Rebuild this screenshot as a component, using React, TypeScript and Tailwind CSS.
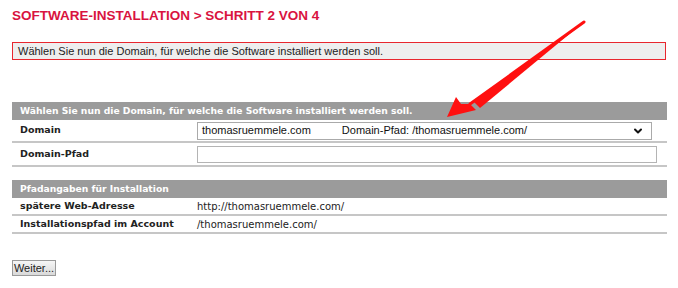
import { ChevronDown } from "lucide-react";

const pathRows = [
  { label: "spätere Web-Adresse", value: "http://thomasruemmele.com/" },
  { label: "Installationspfad im Account", value: "/thomasruemmele.com/" },
];

function SectionHeader({ children }: { children: React.ReactNode }) {
  return (
    <div className="flex h-[18px] items-center bg-[#9b9b9b] pl-2 font-['DejaVu_Sans',sans-serif] text-[9.2px] font-bold text-white">
      {children}
    </div>
  );
}

export default function App() {
  return (
    <div className="relative h-[288px] w-[678px] overflow-hidden bg-white px-3 pt-[8px] font-['Liberation_Sans',Arial,sans-serif]">
      <h1 className="h-[16px] text-[13.5px] leading-[16px] font-bold text-[#d9133f]">
        SOFTWARE-INSTALLATION &gt; SCHRITT 2 VON 4
      </h1>

      <div className="mt-[18px] flex h-[18px] w-[654px] items-center border border-[#e8262e] bg-[#eeeeee] pl-[5px] text-[11px] text-[#222]">
        Wählen Sie nun die Domain, für welche die Software installiert werden soll.
      </div>

      <div className="mt-[42px] w-[655px]">
        <SectionHeader>Wählen Sie nun die Domain, für welche die Software installiert werden soll.</SectionHeader>
        <div className="flex h-[23px] items-center border-b-2 border-[#c6c6c6]">
          <div className="w-[185px] pl-2 font-['DejaVu_Sans',sans-serif] text-[9.5px] font-bold text-[#222]">Domain</div>
          <div className="relative flex h-[18px] w-[455px] items-center border border-[#aaa] bg-white pl-[4px] text-[11px] text-[#111]">
            <span>thomasruemmele.com</span>
            <span className="ml-[31px]">Domain-Pfad: /thomasruemmele.com/</span>
            <ChevronDown className="absolute right-[7px] h-3 w-3" strokeWidth={4} />
          </div>
        </div>
        <div className="flex h-[24px] items-center border-b-2 border-[#c6c6c6]">
          <div className="w-[185px] pl-2 font-['DejaVu_Sans',sans-serif] text-[9.5px] font-bold text-[#222]">Domain-Pfad</div>
          <div className="h-[17px] w-[460px] border border-[#b4b4b4] bg-white" />
        </div>
      </div>

      <div className="mt-[13px] w-[655px]">
        <SectionHeader>Pfadangaben für Installation</SectionHeader>
        {pathRows.map((row) => (
          <div key={row.label} className="flex h-[18px] items-center border-b-2 border-[#c6c6c6] font-['DejaVu_Sans',sans-serif] text-[10px] text-[#222]">
            <div className="w-[185px] pl-2 text-[9.5px] font-bold">{row.label}</div>
            <div>{row.value}</div>
          </div>
        ))}
      </div>

      <button className="mt-[26px] h-[16px] w-[44px] border border-[#9a9a9a] bg-gradient-to-b from-[#f6f6f6] to-[#d9d9d9] text-[11px] leading-[14px] text-[#222]">
        Weiter...
      </button>

      <svg className="pointer-events-none absolute left-0 top-0" width="678" height="288">
        <path d="M584 22 L470 104" stroke="#ff1010" strokeWidth="3" strokeLinecap="round" fill="none" />
        <path d="M584 22 L474 102 L480 108 Z" fill="#ff1010" />
        <path d="M447 117 L456 97 L461 104 L470 104 L476 110 Z" fill="#ff1010" />
      </svg>
    </div>
  );
}
